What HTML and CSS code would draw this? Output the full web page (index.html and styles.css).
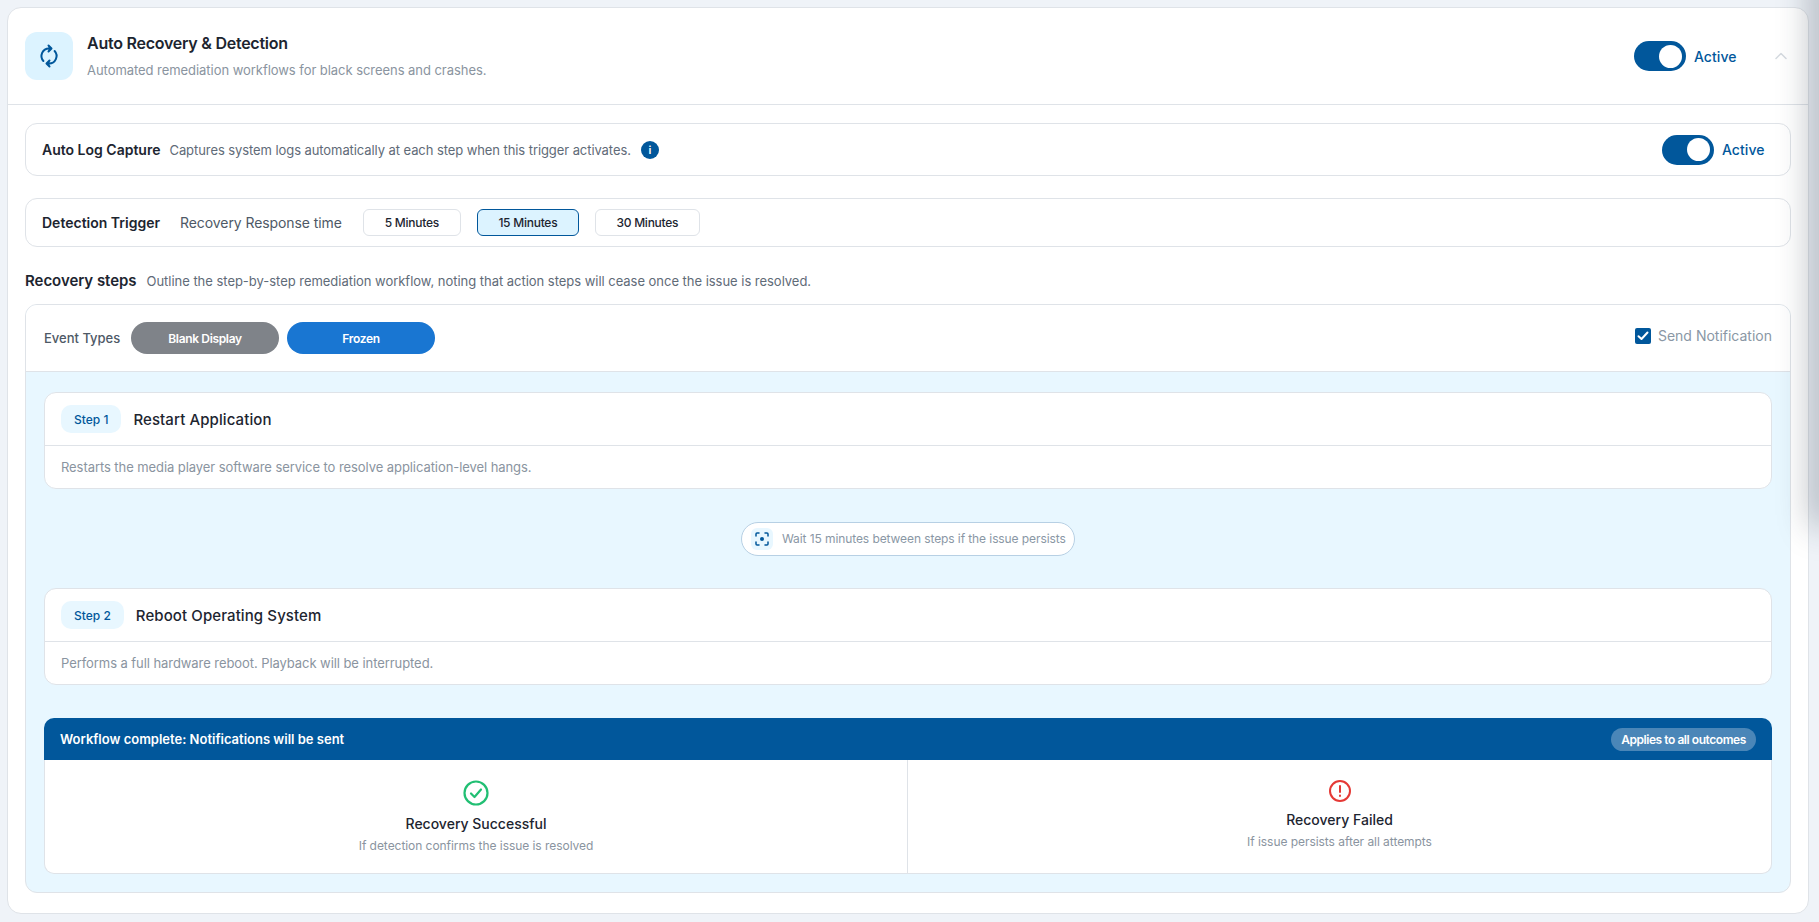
FILE: index.html
```html
<!DOCTYPE html>
<html lang="en">
<head>
<meta charset="utf-8">
<title>Auto Recovery &amp; Detection</title>
<link rel="stylesheet" href="styles.css">
</head>
<body>
<main class="card">
  <header class="head">
    <div class="head-icon">
      <svg width="24" height="24" viewBox="0 0 24 24" fill="none" stroke="#01579b" stroke-width="2" stroke-linecap="round" stroke-linejoin="round"><path d="M12 4.500a7.500 7.500 0 0 0-5.600 12.500"/><path d="M12 19.500a7.500 7.500 0 0 0 5.600-12.500"/><path d="M11.500 1.500l3 3-3 3" fill="#01579b"/><path d="M12.500 22.500l-3-3 3-3" fill="#01579b"/></svg>
    </div>
    <div class="head-text">
      <h1>Auto Recovery &amp; Detection</h1>
      <p>Automated remediation workflows for black screens and crashes.</p>
    </div>
    <div class="toggle-wrap"><span class="toggle"><span class="knob"></span></span><span class="active">Active</span></div>
    <svg class="chev" width="12" height="8" viewBox="0 0 12 8" fill="none" stroke="#d5dae0" stroke-width="1.500" stroke-linecap="round" stroke-linejoin="round"><path d="M1 6.500 6 1.500l5 5"/></svg>
  </header>
  <div class="body">
    <section class="row log">
      <strong>Auto Log Capture</strong>
      <span class="desc">Captures system logs automatically at each step when this trigger activates.</span>
      <span class="info">i</span>
      <div class="toggle-wrap"><span class="toggle"><span class="knob"></span></span><span class="active">Active</span></div>
    </section>
    <section class="row trigger">
      <strong>Detection Trigger</strong>
      <span class="resp">Recovery Response time</span>
      <button class="opt o5">5 Minutes</button>
      <button class="opt o15 sel">15 Minutes</button>
      <button class="opt o30">30 Minutes</button>
    </section>
    <div class="steps-title">
      <strong>Recovery steps</strong>
      <span>Outline the step-by-step remediation workflow, noting that action steps will cease once the issue is resolved.</span>
    </div>
    <section class="panel">
      <div class="events">
        <span class="ev-label">Event Types</span>
        <span class="pill grey">Blank Display</span>
        <span class="pill blue">Frozen</span>
        <label class="notify"><span class="check"><svg width="12" height="10" viewBox="0 0 12 10" fill="none" stroke="#fff" stroke-width="2" stroke-linecap="round" stroke-linejoin="round"><path d="M1.500 5.200 4.500 8l6-6.500"/></svg></span>Send Notification</label>
      </div>
      <div class="flow">
        <article class="step">
          <div class="step-head"><span class="badge">Step 1</span><h2>Restart Application</h2></div>
          <p>Restarts the media player software service to resolve application-level hangs.</p>
        </article>
        <div class="wait-row">
          <div class="wait">
            <span class="wait-icon"><svg width="14" height="14" viewBox="0 0 14 14" fill="none" stroke="#01579b" stroke-width="1.500" stroke-linecap="round"><path d="M1 4V2a1 1 0 0 1 1-1h2M10 1h2a1 1 0 0 1 1 1v2M13 10v2a1 1 0 0 1-1 1h-2M4 13H2a1 1 0 0 1-1-1v-2"/><circle cx="7" cy="7" r="2" fill="#01579b" stroke="none"/></svg></span>
            <span>Wait 15 minutes between steps if the issue persists</span>
          </div>
        </div>
        <article class="step">
          <div class="step-head"><span class="badge">Step 2</span><h2>Reboot Operating System</h2></div>
          <p>Performs a full hardware reboot. Playback will be interrupted.</p>
        </article>
        <section class="complete">
          <div class="complete-head"><span>Workflow complete: Notifications will be sent</span><span class="chip">Applies to all outcomes</span></div>
          <div class="outcomes">
            <div class="outcome">
              <svg width="28" height="28" viewBox="0 0 28 28" fill="none" stroke="#21bf73" stroke-width="2.200" stroke-linecap="round" stroke-linejoin="round"><circle cx="14" cy="14" r="11.500"/><path d="M9 14.500l3.500 3.500L19 10.500"/></svg>
              <h3>Recovery Successful</h3>
              <p>If detection confirms the issue is resolved</p>
            </div>
            <div class="outcome">
              <svg width="24" height="24" viewBox="0 0 24 24" fill="none" stroke="#e53935" stroke-width="2" stroke-linecap="round"><circle cx="12" cy="12" r="10"/><path d="M12 7v6M12 16.500v.5"/></svg>
              <h3>Recovery Failed</h3>
              <p>If issue persists after all attempts</p>
            </div>
          </div>
        </section>
      </div>
    </section>
  </div>
</main>
<div class="edge-shadow"></div>
</body>
</html>
```
FILE: styles.css
```css
* { box-sizing: border-box; }
html, body { height: 100%; }
body {
  margin: 0;
  padding: 7px 10px 0 7px;
  background: #eff3f8;
  font-family: Inter, "Noto Sans", sans-serif;
  color: #1d2530;
  overflow: hidden;
}
h1, h2, h3, p { margin: 0; }
.card {
  height: 907px;
  background: #fff;
  border: 1px solid #dfe3e8;
  border-radius: 14px;
  display: flex;
  flex-direction: column;
}
.edge-shadow {
  position: absolute;
  top: -30px;
  right: -12px;
  width: 12px;
  height: 550px;
  box-shadow: 0 0 34px 6px rgba(30, 40, 55, 0.38);
  pointer-events: none;
}
.head {
  height: 97px;
  padding: 0 21px 0 17px;
  display: flex;
  align-items: center;
  border-bottom: 1px solid #dfe3e8;
  flex: none;
}
.head-icon {
  width: 48px;
  height: 48px;
  border-radius: 12px;
  background: #dcf3ff;
  display: flex;
  align-items: center;
  justify-content: center;
  margin-right: 14px;
  flex: none;
}
.head-text { flex: 1; }
.head-text h1 { font-size: 16px; font-weight: 600; line-height: 20px; letter-spacing: -0.25px; }
.head-text p { font-size: 13px; line-height: 18px; margin-top: 8px; color: #8a94a0; letter-spacing: -0.05px; }
.toggle-wrap { display: flex; align-items: center; gap: 8px; }
.toggle {
  width: 52px;
  height: 30px;
  border-radius: 15px;
  background: #01579b;
  display: flex;
  align-items: center;
  justify-content: flex-end;
  padding-right: 4px;
}
.knob { width: 23px; height: 23px; border-radius: 50%; background: #fff; }
.active { font-size: 14px; font-weight: 500; color: #01579b; width: 43px; letter-spacing: 0.05px; }
.chev { margin-left: 38px; }
.body { padding: 18px 17px 0; flex: 1; display: flex; flex-direction: column; }
.row {
  border: 1px solid #dfe3e8;
  border-radius: 12px;
  display: flex;
  align-items: center;
  padding: 0 25px 0 16px;
  flex: none;
}
.row strong { font-size: 14px; font-weight: 600; letter-spacing: 0; }
.log { height: 53px; }
.log .desc { font-size: 13px; color: #5f6b78; margin-left: 9px; letter-spacing: -0.08px; }
.info {
  width: 18px;
  height: 18px;
  border-radius: 50%;
  background: #01579b;
  color: #fff;
  font-size: 11px;
  font-weight: 600;
  display: flex;
  align-items: center;
  justify-content: center;
  margin-left: 10px;
}
.log .toggle-wrap { margin-left: auto; }
.trigger { height: 49px; margin-top: 22px; }
.resp { font-size: 14px; color: #4e5966; margin-left: 20px; margin-right: 21px; letter-spacing: -0.08px; }
.opt {
  height: 27px;
  font: 500 12px Inter, sans-serif;
  letter-spacing: -0.25px;
  color: #1d2530;
  background: #fff;
  border: 1px solid #dfe3e8;
  border-radius: 6px;
  padding: 0;
  margin-right: 16px;
}
.o5 { width: 98px; }
.o15 { width: 102px; }
.o30 { width: 105px; }
.sel { background: #dcf3ff; border-color: #01579b; }
.steps-title { display: flex; align-items: baseline; gap: 10px; height: 18px; margin-top: 25px; line-height: 18px; }
.steps-title strong { font-size: 15px; font-weight: 600; letter-spacing: -0.04px; }
.steps-title span { font-size: 13px; color: #5f6b78; letter-spacing: -0.03px; }
.panel {
  margin-top: 14px;
  height: 589px;
  border: 1px solid #dfe3e8;
  border-radius: 12px;
  overflow: hidden;
  background: #e8f7ff;
  display: flex;
  flex-direction: column;
}
.events {
  height: 67px;
  flex: none;
  background: #fff;
  border-bottom: 1px solid #dfe3e8;
  display: flex;
  align-items: center;
  padding: 0 18px;
  gap: 8px;
}
.ev-label { font-size: 13px; font-weight: 500; color: #4e5966; margin-right: 4px; width: 75px; white-space: nowrap; }
.pill {
  width: 148px;
  height: 32px;
  border-radius: 16px;
  color: #fff;
  font-size: 12px;
  font-weight: 600;
  letter-spacing: -0.35px;
  display: flex;
  align-items: center;
  justify-content: center;
}
.grey { background: #7f8389; }
.blue { background: #1976d2; }
.notify { margin-left: auto; margin-bottom: 5px; display: flex; align-items: center; gap: 7px; font-size: 14px; color: #8a97a5; }
.check { width: 16px; height: 16px; border-radius: 2px; background: #01579b; display: flex; align-items: center; justify-content: center; }
.flow { padding: 20px 18px 0; flex: 1; display: flex; flex-direction: column; }
.step {
  height: 97px;
  flex: none;
  background: #fff;
  border: 1px solid #dfe3e8;
  border-radius: 12px;
}
.step-head {
  height: 53px;
  padding: 0 16px;
  display: flex;
  align-items: center;
  gap: 12px;
  border-bottom: 1px solid #dfe3e8;
}
.badge {
  height: 28px;
  padding: 0 13px;
  border-radius: 10px;
  background: #e8f7ff;
  color: #01579b;
  font-size: 12px;
  font-weight: 500;
  display: flex;
  align-items: center;
}
.step h2 { font-size: 15px; font-weight: 500; letter-spacing: 0.1px; }
.step p { font-size: 13px; color: #8a94a0; padding: 12px 16px 0; line-height: 18px; letter-spacing: -0.07px; }
.wait-row { height: 99px; flex: none; display: flex; align-items: center; justify-content: center; }
.wait {
  width: 334px;
  height: 34px;
  background: #fff;
  border: 1px solid #b7d0e4;
  border-radius: 17px;
  display: flex;
  align-items: center;
  padding: 0 9px;
  gap: 9px;
  font-size: 12px;
  letter-spacing: -0.09px;
  color: #8a97a5;
  white-space: nowrap;
}
.wait-icon { width: 22px; height: 22px; border-radius: 6px; background: #e8f7ff; display: flex; align-items: center; justify-content: center; flex: none; }
.complete {
  margin-top: 33px;
  height: 156px;
  flex: none;
}
.complete-head {
  height: 42px;
  background: #01579b;
  border-radius: 10px 10px 0 0;
  color: #fff;
  font-size: 13px;
  font-weight: 600;
  display: flex;
  align-items: center;
  justify-content: space-between;
  padding: 0 16px;
}
.chip {
  height: 23px;
  width: 145px;
  border-radius: 12px;
  background: #4a86b8;
  font-size: 12px;
  font-weight: 600;
  letter-spacing: -0.45px;
  display: flex;
  align-items: center;
  justify-content: center;
}
.outcomes {
  height: 114px;
  display: grid;
  grid-template-columns: calc(50% - 1px) 1fr;
  background: #fff;
  border: 1px solid #dfe3e8;
  border-top: 0;
  border-radius: 0 0 10px 10px;
}
.outcome { display: flex; flex-direction: column; align-items: center; padding-top: 19px; }
.outcome + .outcome { border-left: 1px solid #dfe3e8; }
.outcome h3 { font-size: 14px; font-weight: 500; line-height: 18px; margin-top: 8px; }
.outcome p { font-size: 12px; color: #8a94a0; line-height: 16px; margin-top: 5px; letter-spacing: -0.05px; }
```
